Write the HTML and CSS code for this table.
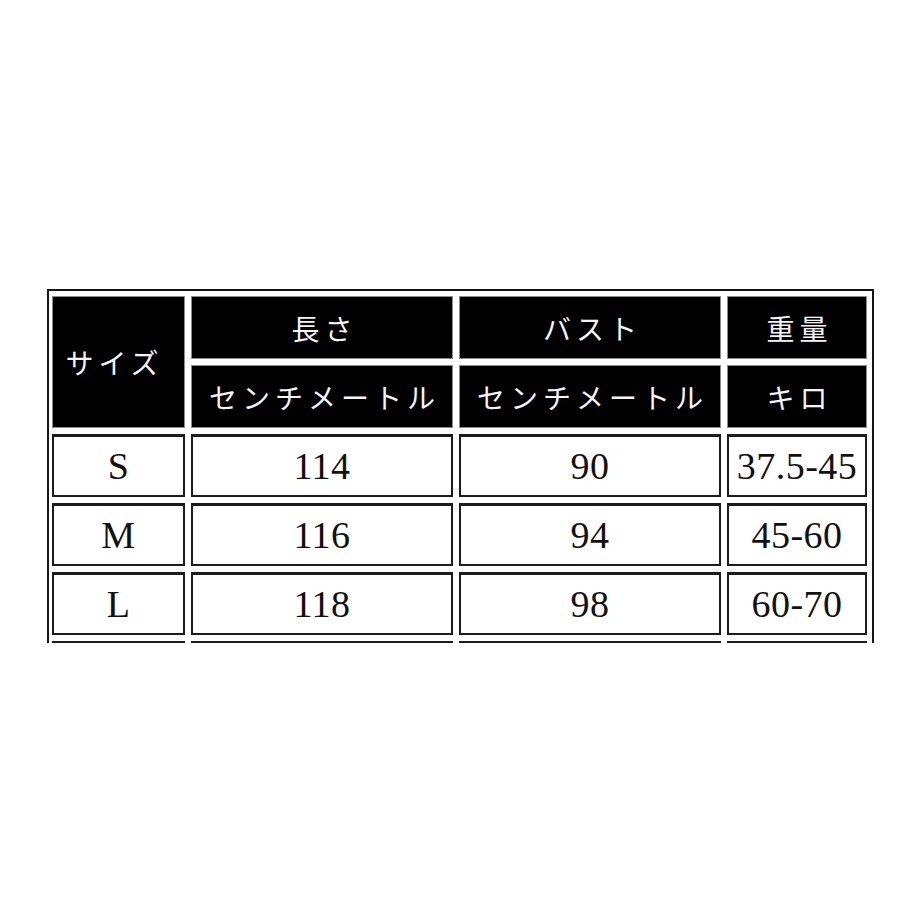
FILE: index.html
```html
<!DOCTYPE html>
<html lang="ja">
<head>
<meta charset="utf-8">
<title>サイズ表</title>
<link rel="stylesheet" href="styles.css">
</head>
<body>
<div class="frame">
  <div class="grid">
    <div class="cell head size-head">サイズ</div>
    <div class="cell head">長さ</div>
    <div class="cell head">バスト</div>
    <div class="cell head">重量</div>
    <div class="cell head unit">センチメートル</div>
    <div class="cell head unit">センチメートル</div>
    <div class="cell head unit">キロ</div>

    <div class="cell data">S</div>
    <div class="cell data">114</div>
    <div class="cell data">90</div>
    <div class="cell data">37.5-45</div>

    <div class="cell data">M</div>
    <div class="cell data">116</div>
    <div class="cell data">94</div>
    <div class="cell data">45-60</div>

    <div class="cell data">L</div>
    <div class="cell data">118</div>
    <div class="cell data">98</div>
    <div class="cell data">60-70</div>

    <div class="cell data"></div>
    <div class="cell data"></div>
    <div class="cell data"></div>
    <div class="cell data"></div>
  </div>
</div>
</body>
</html>
```
FILE: styles.css
```css
html, body {
  margin: 0;
  padding: 0;
  background: #ffffff;
}

.frame {
  box-sizing: border-box;
  margin: 289px 0 0 47px;
  width: 827px;
  height: 354px;
  border-top: 2px solid #151515;
  border-left: 2px solid #151515;
  border-right: 2px solid #151515;
  padding: 5px 5px 0 3px;
  overflow: hidden;
}

.grid {
  display: grid;
  grid-template-columns: 133px 262px 262px 140px;
  grid-auto-rows: 63px;
  gap: 6px;
}

.cell {
  box-sizing: border-box;
  display: flex;
  align-items: center;
  justify-content: center;
  white-space: nowrap;
}

.head {
  background: #000000;
  border: 1px solid #8c8c8c;
  color: #f4f4f4;
  font-family: "Noto Sans CJK JP", "Noto Sans", sans-serif;
  font-weight: 400;
  font-size: 28px;
  letter-spacing: 5px;
  padding-left: 5px;
}

.size-head {
  grid-row: span 2;
  padding-left: 0;
  padding-right: 8px;
}

.data {
  background: #ffffff;
  border: 2px solid #1c1c1c;
  border-top-width: 3px;
  color: #111111;
  font-family: "Liberation Serif", "DejaVu Serif", serif;
  font-size: 38px;
  letter-spacing: 0.5px;
}
```
